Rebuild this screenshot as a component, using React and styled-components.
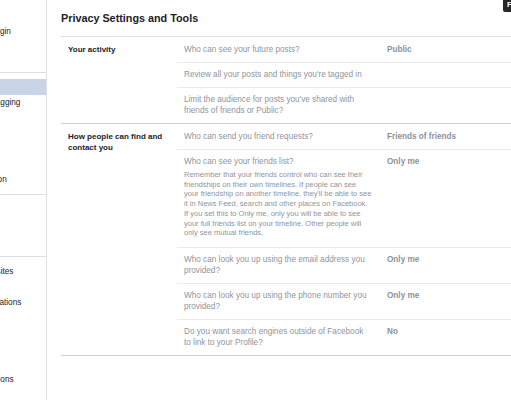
import React from 'react';
import styled, { createGlobalStyle } from 'styled-components';

const GlobalStyle = createGlobalStyle`
  html, body { margin: 0; padding: 0; background: #fff; }
  body { font-family: "Liberation Sans", Arial, Helvetica, sans-serif; color: #1d2129; }
  * { box-sizing: border-box; }
`;

const Page = styled.div`
  position: relative;
  display: flex;
  height: 400px;
  overflow: hidden;
`;

const Sidebar = styled.nav`
  flex: 0 0 47px;
  border-right: 1px solid #dddfe2;
  overflow: hidden;
`;

const SideList = styled.div`
  margin-left: -65px;
  width: 200px;
`;

const SideGroup = styled.div`
  padding: ${(p) => p.$pad};
  border-bottom: ${(p) => (p.$last ? 'none' : '1px solid #dddfe2')};
`;

const SideItem = styled.div`
  height: 15.5px;
  line-height: 15.5px;
  padding-left: 8px;
  font-size: 8.2px;
  color: #1d2129;
  white-space: nowrap;
  background: ${(p) => (p.$active ? '#c9d4e6' : 'transparent')};
`;

const Main = styled.main`
  flex: 1;
  min-width: 0;
  padding-left: 14px;
`;

const Title = styled.h2`
  margin: 0;
  padding: 11px 0;
  font-size: 10.8px;
  line-height: 14px;
  font-weight: bold;
  color: #1d2129;
  border-bottom: 1px solid #dddfe2;
`;

const Section = styled.section`
  display: grid;
  grid-template-columns: 116px 1fr;
  padding-top: 1px;
  border-bottom: 1px solid #cfd2d6;
`;

const SectionLabel = styled.div`
  padding: 6px 7px 7px;
  font-size: 8px;
  font-weight: bold;
  line-height: 11px;
  color: #1d2129;
`;

const Rows = styled.div`
  display: flex;
  flex-direction: column;
`;

const Row = styled.div`
  display: grid;
  grid-template-columns: 203px 1fr;
  & + & {
    border-top: 1px solid #e9ebee;
  }
`;

const Question = styled.div`
  padding: 6px 8px 7px 7px;
  font-size: 8.2px;
  line-height: 11px;
  color: #90949c;
`;

const Note = styled.div`
  margin: 3px 0 2px;
  font-size: 7.5px;
  line-height: 9.7px;
`;

const Value = styled.div`
  padding: 6px 7px 7px;
  font-size: 8.2px;
  font-weight: bold;
  line-height: 11px;
  color: #8d9199;
  white-space: nowrap;
`;

const HelpTip = styled.div`
  position: absolute;
  top: -3px;
  left: 503px;
  padding: 3px 4px;
  border-radius: 2px;
  background: #23272e;
  color: #fff;
  font-size: 8px;
  font-weight: bold;
  line-height: 9px;
`;

const sideGroups = [
  { pad: '8.75px 0 32.25px', items: ['General', 'Security and Login'] },
  {
    pad: '6px 0 6px',
    items: [
      'Privacy',
      'Timeline and Tagging',
      'Location',
      'Blocking',
      'Language',
      'Public Posts',
      'Face Recognition',
    ],
    active: 'Privacy',
  },
  { pad: '7px 0 7.5px', items: ['Notifications', 'Mobile', 'Followers'] },
  {
    pad: '7px 0 0',
    items: [
      'Apps and Websites',
      'Instant Games',
      'Business Integrations',
      'Ads',
      'Payments',
      'Support Inbox',
      'Videos',
      'Linked Publications',
    ],
    last: true,
  },
];

const sections = [
  {
    label: 'Your activity',
    rows: [
      { q: 'Who can see your future posts?', v: 'Public' },
      { q: "Review all your posts and things you're tagged in" },
      { q: "Limit the audience for posts you've shared with friends of friends or Public?" },
    ],
  },
  {
    label: 'How people can find and contact you',
    rows: [
      { q: 'Who can send you friend requests?', v: 'Friends of friends' },
      {
        q: 'Who can see your friends list?',
        note:
          "Remember that your friends control who can see their friendships on their own timelines. If people can see your friendship on another timeline, they'll be able to see it in News Feed, search and other places on Facebook. If you set this to Only me, only you will be able to see your full friends list on your timeline. Other people will only see mutual friends.",
        v: 'Only me',
      },
      { q: 'Who can look you up using the email address you provided?', v: 'Only me' },
      { q: 'Who can look you up using the phone number you provided?', v: 'Only me' },
      { q: 'Do you want search engines outside of Facebook to link to your Profile?', v: 'No' },
    ],
  },
];

export default function App() {
  return (
    <>
      <GlobalStyle />
      <Page>
        <Sidebar>
          <SideList>
            {sideGroups.map((g, i) => (
              <SideGroup key={i} $pad={g.pad} $last={g.last}>
                {g.items.map((it) => (
                  <SideItem key={it} $active={g.active === it}>
                    {it}
                  </SideItem>
                ))}
              </SideGroup>
            ))}
          </SideList>
        </Sidebar>
        <Main>
          <Title>Privacy Settings and Tools</Title>
          {sections.map((s) => (
            <Section key={s.label}>
              <SectionLabel>{s.label}</SectionLabel>
              <Rows>
                {s.rows.map((r) => (
                  <Row key={r.q}>
                    <Question>
                      {r.q}
                      {r.note && <Note>{r.note}</Note>}
                    </Question>
                    <Value>{r.v}</Value>
                  </Row>
                ))}
              </Rows>
            </Section>
          ))}
        </Main>
        <HelpTip>F</HelpTip>
      </Page>
    </>
  );
}
